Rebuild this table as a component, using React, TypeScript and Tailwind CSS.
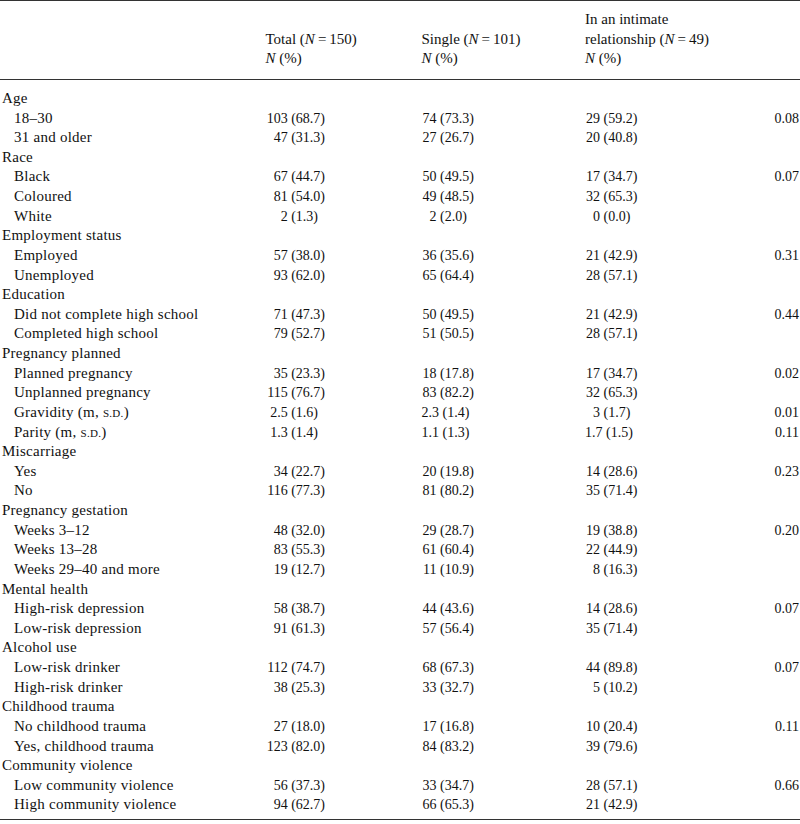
import React from 'react';

type Row = {
  label: React.ReactNode;
  group?: boolean;
  total?: string;
  single?: string;
  intimate?: string;
  p?: string;
};

const SD = (
  <span className="text-[11px] tracking-[0.3px]">S.D.</span>
);

const ROWS: Row[] = [
  { label: 'Age', group: true },
  { label: '18–30', total: '103 (68.7)', single: '74 (73.3)', intimate: '29 (59.2)', p: '0.08' },
  { label: '31 and older', total: '47 (31.3)', single: '27 (26.7)', intimate: '20 (40.8)' },
  { label: 'Race', group: true },
  { label: 'Black', total: '67 (44.7)', single: '50 (49.5)', intimate: '17 (34.7)', p: '0.07' },
  { label: 'Coloured', total: '81 (54.0)', single: '49 (48.5)', intimate: '32 (65.3)' },
  { label: 'White', total: '2 (1.3)', single: '2 (2.0)', intimate: '0 (0.0)' },
  { label: 'Employment status', group: true },
  { label: 'Employed', total: '57 (38.0)', single: '36 (35.6)', intimate: '21 (42.9)', p: '0.31' },
  { label: 'Unemployed', total: '93 (62.0)', single: '65 (64.4)', intimate: '28 (57.1)' },
  { label: 'Education', group: true },
  { label: 'Did not complete high school', total: '71 (47.3)', single: '50 (49.5)', intimate: '21 (42.9)', p: '0.44' },
  { label: 'Completed high school', total: '79 (52.7)', single: '51 (50.5)', intimate: '28 (57.1)' },
  { label: 'Pregnancy planned', group: true },
  { label: 'Planned pregnancy', total: '35 (23.3)', single: '18 (17.8)', intimate: '17 (34.7)', p: '0.02' },
  { label: 'Unplanned pregnancy', total: '115 (76.7)', single: '83 (82.2)', intimate: '32 (65.3)' },
  { label: <>Gravidity (m, {SD})</>, total: '2.5 (1.6)', single: '2.3 (1.4)', intimate: '3 (1.7)', p: '0.01' },
  { label: <>Parity (m, {SD})</>, total: '1.3 (1.4)', single: '1.1 (1.3)', intimate: '1.7 (1.5)', p: '0.11' },
  { label: 'Miscarriage', group: true },
  { label: 'Yes', total: '34 (22.7)', single: '20 (19.8)', intimate: '14 (28.6)', p: '0.23' },
  { label: 'No', total: '116 (77.3)', single: '81 (80.2)', intimate: '35 (71.4)' },
  { label: 'Pregnancy gestation', group: true },
  { label: 'Weeks 3–12', total: '48 (32.0)', single: '29 (28.7)', intimate: '19 (38.8)', p: '0.20' },
  { label: 'Weeks 13–28', total: '83 (55.3)', single: '61 (60.4)', intimate: '22 (44.9)' },
  { label: 'Weeks 29–40 and more', total: '19 (12.7)', single: '11 (10.9)', intimate: '8 (16.3)' },
  { label: 'Mental health', group: true },
  { label: 'High-risk depression', total: '58 (38.7)', single: '44 (43.6)', intimate: '14 (28.6)', p: '0.07' },
  { label: 'Low-risk depression', total: '91 (61.3)', single: '57 (56.4)', intimate: '35 (71.4)' },
  { label: 'Alcohol use', group: true },
  { label: 'Low-risk drinker', total: '112 (74.7)', single: '68 (67.3)', intimate: '44 (89.8)', p: '0.07' },
  { label: 'High-risk drinker', total: '38 (25.3)', single: '33 (32.7)', intimate: '5 (10.2)' },
  { label: 'Childhood trauma', group: true },
  { label: 'No childhood trauma', total: '27 (18.0)', single: '17 (16.8)', intimate: '10 (20.4)', p: '0.11' },
  { label: 'Yes, childhood trauma', total: '123 (82.0)', single: '84 (83.2)', intimate: '39 (79.6)' },
  { label: 'Community violence', group: true },
  { label: 'Low community violence', total: '56 (37.3)', single: '33 (34.7)', intimate: '28 (57.1)', p: '0.66' },
  { label: 'High community violence', total: '94 (62.7)', single: '66 (65.3)', intimate: '21 (42.9)' },
];

// first number sits right-aligned in a fixed box so the brackets line up
function Value({ v, w }: { v?: string; w: string }) {
  if (!v) return <div />;
  const i = v.indexOf(' ');
  return (
    <div className="whitespace-nowrap text-[14px]">
      <span className={`inline-block text-right ${w}`}>{v.slice(0, i)}</span>
      {'\u00a0' + v.slice(i + 1)}
    </div>
  );
}

const GRID = 'grid grid-cols-[265.5px_156px_163.5px_1fr_60px]';

function NHead({ n }: { n: string }) {
  return (
    <>
      (<i>N</i>{'\u2009=\u2009'}{n})
    </>
  );
}

export default function App() {
  return (
    <div
      className="w-[800px] min-h-[824px] bg-white text-[#111]"
      style={{ fontFamily: '"Liberation Serif", "Times New Roman", serif' }}
    >
      <div className="border-t border-[#333]">
        {/* Header */}
        <div className={`${GRID} pt-[9px] pb-[10px] border-b border-[#333] text-[15px] leading-[19.64px]`}>
          <div />
          <div className="flex flex-col">
            <span className="h-[19.64px]" />
            <span>
              Total <NHead n="150" />
            </span>
            <span>
              <i>N</i> (%)
            </span>
          </div>
          <div className="flex flex-col">
            <span className="h-[19.64px]" />
            <span>
              Single <NHead n="101" />
            </span>
            <span>
              <i>N</i> (%)
            </span>
          </div>
          <div className="flex flex-col whitespace-nowrap">
            <span>In an intimate</span>
            <span>
              relationship <NHead n="49" />
            </span>
            <span>
              <i>N</i> (%)
            </span>
          </div>
          <div />
        </div>

        {/* Body */}
        <div className="pt-[9px] pb-[4px] border-b border-[#333]">
          {ROWS.map((r, idx) => (
            <div key={idx} className={`${GRID} h-[19.64px] leading-[19.64px]`}>
              <div className={`text-[15px] tracking-[0.25px] whitespace-nowrap ${r.group ? 'pl-[2px]' : 'pl-[14px]'}`}>
                {r.label}
              </div>
              <Value v={r.total} w="min-w-[22.2px]" />
              <Value v={r.single} w="min-w-[15px]" />
              <Value v={r.intimate} w="min-w-[15px]" />
              <div className="text-right pr-[1px] text-[14px]">{r.p}</div>
            </div>
          ))}
        </div>
      </div>
    </div>
  );
}
